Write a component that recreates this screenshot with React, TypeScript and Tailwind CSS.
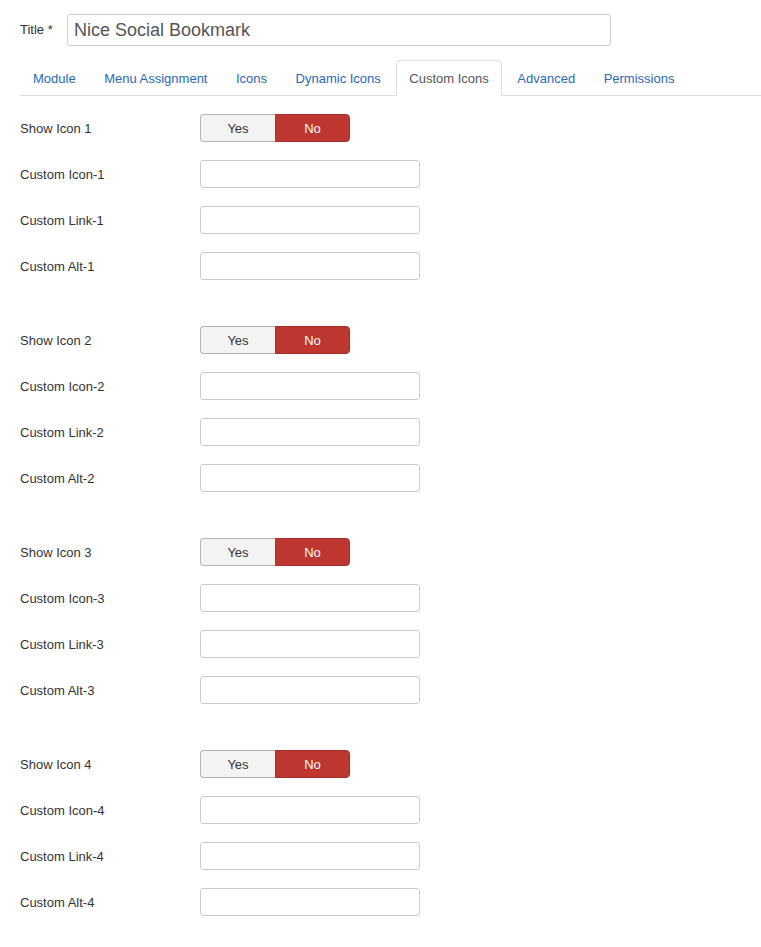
import React from 'react';

const tabs = ['Module', 'Menu Assignment', 'Icons', 'Dynamic Icons', 'Custom Icons', 'Advanced', 'Permissions'];
const activeTab = 'Custom Icons';

const groups = [1, 2, 3, 4];

function Toggle() {
  return (
    <div className="flex h-[28px] text-[13px]">
      <button className="w-[75px] h-full rounded-l-[4px] border border-[#b3b3b3] border-r-0 bg-[#f3f3f3] text-[#333] pt-px">
        Yes
      </button>
      <button className="w-[75px] h-full rounded-r-[4px] border border-[#a52f29] bg-[#bd362f] text-white pt-px">
        No
      </button>
    </div>
  );
}

function Row({ label, children }: { label: string; children: React.ReactNode }) {
  return (
    <div className="flex items-center mb-[18px]">
      <label className="w-[180px] pt-px text-[13px] text-[#333]">{label}</label>
      {children}
    </div>
  );
}

function TextInput() {
  return (
    <input
      type="text"
      className="w-[220px] h-[28px] rounded-[3px] border border-[#ccc] bg-white px-[6px] text-[13px] outline-none"
    />
  );
}

export default function App() {
  return (
    <div
      className="min-h-[947px] w-[761px] bg-white pl-[20px] pt-[14px]"
      style={{ fontFamily: '"Liberation Sans", Arial, sans-serif' }}
    >
      {/* Title */}
      <div className="flex items-center">
        <label className="w-[47px] text-[13px] text-[#333] -mt-px">Title *</label>
        <input
          type="text"
          defaultValue="Nice Social Bookmark"
          className="w-[544px] h-[32px] rounded-[3px] border border-[#ccc] px-[6px] text-[18px] text-[#555] outline-none"
        />
      </div>

      {/* Tabs */}
      <ul className="mt-[14px] flex border-b border-[#ddd]">
        {tabs.map((tab) => (
          <li key={tab} className="mr-[2.5px] -mb-px">
            <a
              className={
                tab === activeTab
                  ? 'block px-[12px] pt-[9px] pb-[7px] leading-[18px] text-[13px] text-[#555] border border-[#ddd] border-b-white rounded-t-[4px] bg-white'
                  : 'block px-[12px] pt-[9px] pb-[7px] leading-[18px] text-[13px] text-[#2a69b8] border border-transparent'
              }
            >
              {tab}
            </a>
          </li>
        ))}
      </ul>

      {/* Fields */}
      <div className="pt-[18px]">
        {groups.map((n) => (
          <div key={n} className="pb-[28px]">
            <Row label={`Show Icon ${n}`}>
              <Toggle />
            </Row>
            <Row label={`Custom Icon-${n}`}>
              <TextInput />
            </Row>
            <Row label={`Custom Link-${n}`}>
              <TextInput />
            </Row>
            <Row label={`Custom Alt-${n}`}>
              <TextInput />
            </Row>
          </div>
        ))}
      </div>
    </div>
  );
}
